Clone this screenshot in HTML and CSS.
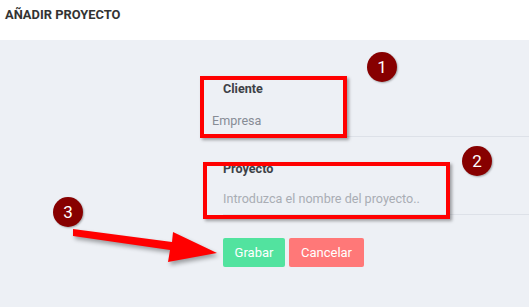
FILE: index.html
```html
<!DOCTYPE html>
<html lang="es">
<head>
    <meta charset="UTF-8">
    <meta name="viewport" content="width=device-width, initial-scale=1.0">
    <title>Añadir proyecto</title>
    <link rel="stylesheet" href="styles.css">
</head>
<body>
    <div class="page-header">
        <h1>AÑADIR PROYECTO</h1>
    </div>

    <div class="page-content">
        <form class="project-form">
            <div class="form-group client-group">
                <label class="field-label">Cliente</label>
                <div class="field-value">Empresa</div>
            </div>
            <div class="form-group project-group">
                <label class="field-label" for="project">Proyecto</label>
                <input type="text" id="project" class="field-input" placeholder="Introduzca el nombre del proyecto..">
            </div>
            <div class="form-actions">
                <button type="submit" class="btn btn-save">Grabar</button>
                <button type="button" class="btn btn-cancel">Cancelar</button>
            </div>
        </form>
    </div>

    <!-- annotations drawn over the screenshot -->
    <div class="mark mark-client"></div>
    <div class="mark mark-project"></div>
    <span class="badge badge-1">1</span>
    <span class="badge badge-2">2</span>
    <span class="badge badge-3">3</span>
    <svg class="arrow" width="529" height="307" viewBox="0 0 529 307">
        <polygon points="73,229 172,242 173,232 217,253 168,262 170,250 73,236" fill="#ff0000"/>
    </svg>
</body>
</html>
```

FILE: styles.css
```css
body {
    margin: 0;
    padding: 0;
    font-family: Roboto, "Liberation Sans", sans-serif;
    background-color: #edf0f5;
    height: 307px;
    overflow: hidden;
}

.page-header {
    background: #fff;
    height: 40px;
    padding: 0 5px;
}
.page-header h1 {
    margin: 0;
    padding-top: 7px;
    font-size: 12.9px;
    line-height: 15px;
    font-weight: bold;
    color: #333;
}

.project-form {
    margin-left: 212px;
    padding-top: 41px;
}
.form-group {
    border-bottom: 1px solid #dde1e8;
}
.project-group {
    margin-top: 24px;
    margin-left: 11px;
}
.field-label {
    display: block;
    font-size: 12.6px;
    line-height: 15px;
    font-weight: bold;
    color: #3d4147;
}
.client-group .field-label {
    padding-left: 11px;
}
.field-value,
.field-input {
    display: block;
    margin-top: 10px;
    height: 30px;
    line-height: 30px;
    font-size: 12.6px;
    color: #878c95;
}
.project-group .field-input {
    margin-top: 8px;
}
.field-input {
    width: 100%;
    box-sizing: border-box;
    padding: 0;
    border: none;
    background: transparent;
    font-family: inherit;
    outline: none;
}
.field-input::placeholder {
    color: #a9adb4;
}

.form-actions {
    display: flex;
    gap: 4px;
    margin-top: 23px;
    margin-left: 11px;
}
.btn {
    height: 29px;
    padding: 0;
    border: none;
    border-radius: 2px;
    color: #fff;
    font-family: inherit;
    font-size: 13px;
    cursor: pointer;
}
.btn-save {
    background-color: #52e39f;
    width: 62px;
}
.btn-cancel {
    background-color: #ff7878;
    width: 75px;
}

.mark {
    position: absolute;
    box-sizing: border-box;
    border: 4px solid #ff0000;
    box-shadow: 2px 2px 3px rgba(0, 0, 0, 0.35);
}
.mark-client {
    left: 200px;
    top: 76px;
    width: 147px;
    height: 62px;
}
.mark-project {
    left: 203px;
    top: 162px;
    width: 247px;
    height: 57px;
}

.badge {
    position: absolute;
    width: 30px;
    height: 30px;
    border-radius: 50%;
    background-color: #870000;
    color: #fff;
    font-size: 17px;
    line-height: 30px;
    text-align: center;
    box-shadow: 1px 1px 2px rgba(0, 0, 0, 0.3);
}
.badge-1 { left: 367px; top: 52px; }
.badge-2 { left: 462px; top: 146px; }
.badge-3 { left: 53px; top: 197px; }

.arrow {
    position: absolute;
    left: 0;
    top: 0;
    filter: drop-shadow(2px 3px 2px rgba(0, 0, 0, 0.35));
}
```
